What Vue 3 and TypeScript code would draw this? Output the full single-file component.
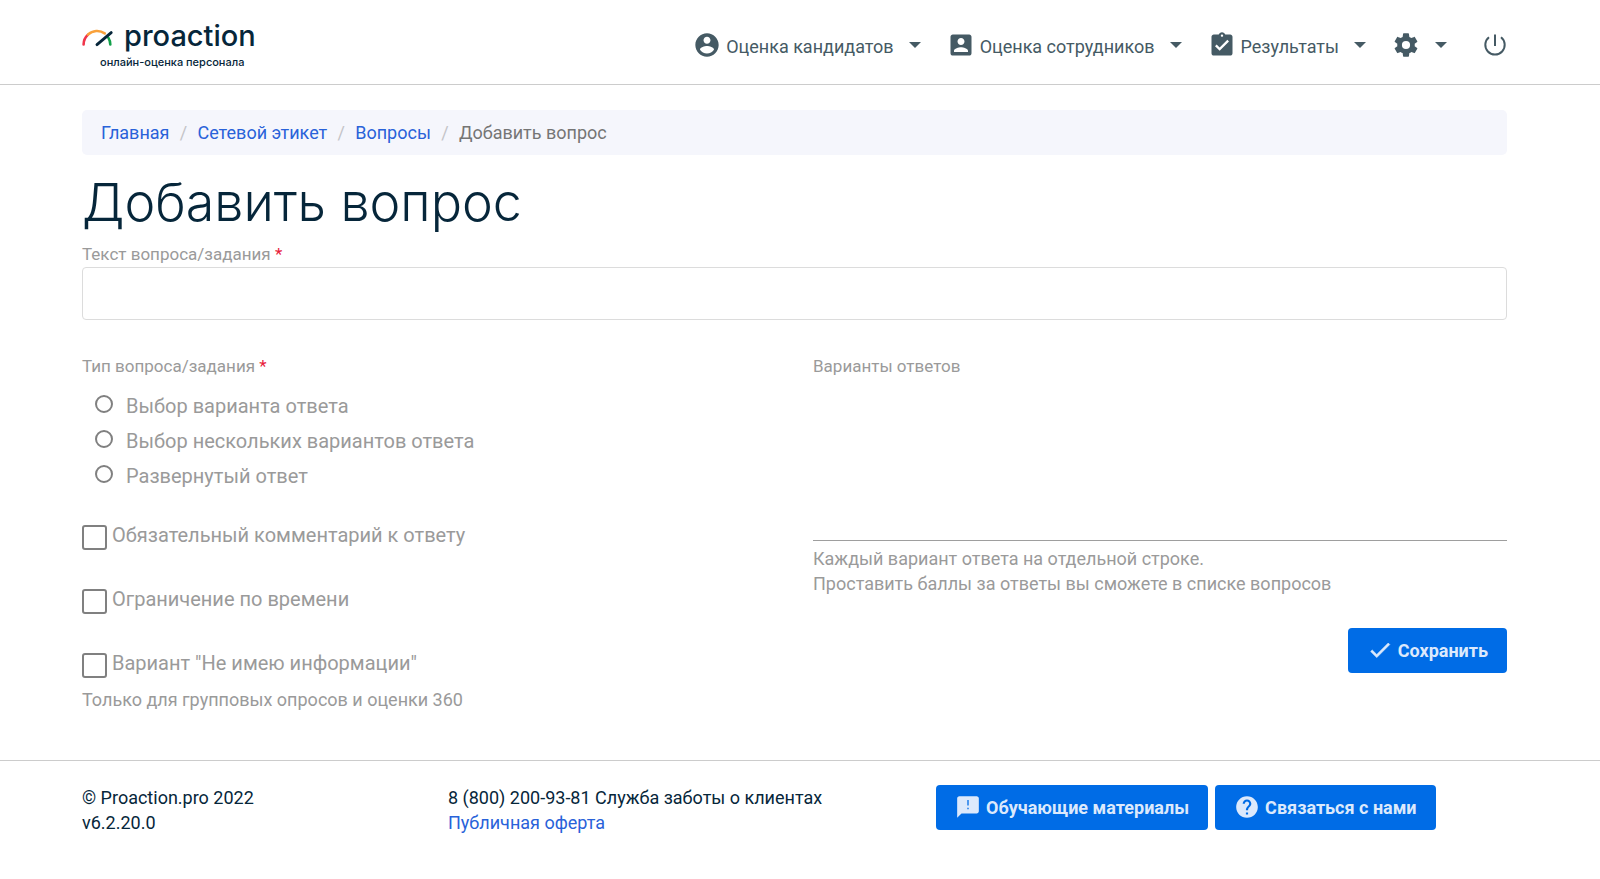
<script setup lang="ts">
import { ref } from 'vue'

interface NavItem { label: string; path: string }

const navItems: NavItem[] = [
  {
    label: 'Оценка кандидатов',
    path: 'M12 2C6.48 2 2 6.48 2 12s4.48 10 10 10 10-4.48 10-10S17.52 2 12 2zm0 3c1.66 0 3 1.34 3 3s-1.34 3-3 3-3-1.34-3-3 1.34-3 3-3zm0 14.2c-2.5 0-4.71-1.28-6-3.22.03-1.99 4-3.08 6-3.08 1.99 0 5.97 1.09 6 3.08-1.29 1.94-3.5 3.22-6 3.22z',
  },
  {
    label: 'Оценка сотрудников',
    path: 'M3 5v14c0 1.1.89 2 2 2h14c1.1 0 2-.9 2-2V5c0-1.1-.9-2-2-2H5c-1.11 0-2 .9-2 2zm12 4c0 1.66-1.34 3-3 3s-3-1.34-3-3 1.34-3 3-3 3 1.34 3 3zm-9 8c0-2 4-3.1 6-3.1s6 1.1 6 3.1v1H6v-1z',
  },
  {
    label: 'Результаты',
    path: 'M19 3h-4.18C14.4 1.84 13.3 1 12 1c-1.3 0-2.4.84-2.82 2H5c-1.1 0-2 .9-2 2v14c0 1.1.9 2 2 2h14c1.1 0 2-.9 2-2V5c0-1.1-.9-2-2-2zm-7 0c.55 0 1 .45 1 1s-.45 1-1 1-1-.45-1-1 .45-1 1-1zm-2 14l-4-4 1.41-1.41L10 14.17l6.59-6.59L18 9l-8 8z',
  },
]

const crumbs: string[] = ['Главная', 'Сетевой этикет', 'Вопросы']
const questionTypes: string[] = ['Выбор варианта ответа', 'Выбор нескольких вариантов ответа', 'Развернутый ответ']
const options: string[] = ['Обязательный комментарий к ответу', 'Ограничение по времени', 'Вариант "Не имею информации"']

const question = ref('')
const answers = ref('')
const questionType = ref('')
const enabled = ref<string[]>([])
</script>

<template>
  <div class="page">
    <header class="header">
      <div class="container header-row">
        <a class="logo" href="#" aria-label="proaction">
          <span class="logo-main">
            <svg class="logo-mark" viewBox="0 0 32 18" fill="none" stroke-width="2.6" stroke-linecap="round" aria-hidden="true">
              <path d="M26.300 8.600A13.300 13.300 0 0 1 28.300 15.400" stroke="#12a04a" />
              <path d="M1.600 15.400A13.300 13.300 0 0 1 6 5.600" stroke="#f0354b" />
              <path d="M6 5.600A13.300 13.300 0 0 1 22.700 4.400" stroke="#f9a13a" />
              <path d="M15 15.600L29.200 3.600" stroke="#06263a" stroke-width="2.900" />
            </svg>
            <span class="logo-name">proaction</span>
          </span>
          <span class="logo-tag">онлайн-оценка персонала</span>
        </a>
        <nav class="nav" aria-label="Главное меню">
          <button v-for="item in navItems" :key="item.label" type="button" class="nav-item">
            <svg class="icon" viewBox="0 0 24 24" aria-hidden="true"><path :d="item.path" /></svg>
            <span class="nav-label">{{ item.label }}</span>
            <span class="caret"></span>
          </button>
          <button type="button" class="nav-item" aria-label="Настройки">
            <svg class="icon" viewBox="0 0 24 24" aria-hidden="true">
              <path d="M12 15.5A3.5 3.5 0 0 1 8.500 12 3.500 3.500 0 0 1 12 8.500a3.500 3.500 0 0 1 3.500 3.500 3.500 3.500 0 0 1-3.500 3.500m7.430-2.530c.04-.32.07-.64.07-.97s-.03-.66-.07-1l2.110-1.630c.19-.15.24-.42.12-.64l-2-3.460c-.12-.22-.39-.31-.61-.22l-2.490 1c-.52-.39-1.060-.73-1.690-.98l-.37-2.650A.506.506 0 0 0 14 2h-4c-.25 0-.46.18-.5.42l-.37 2.650c-.63.25-1.170.59-1.690.98l-2.490-1c-.22-.09-.49 0-.61.22l-2 3.460c-.13.22-.07.49.12.64L4.570 11c-.04.34-.07.67-.07 1s.03.65.07.97l-2.110 1.660c-.19.15-.25.42-.12.64l2 3.460c.12.22.39.3.61.22l2.490-1.010c.52.4 1.060.74 1.690.99l.37 2.650c.04.24.25.42.5.42h4c.25 0 .46-.18.5-.42l.37-2.650c.63-.26 1.170-.59 1.690-.99l2.490 1.010c.22.08.49 0 .61-.22l2-3.460c.12-.22.07-.49-.12-.64l-2.110-1.660z" />
            </svg>
            <span class="caret"></span>
          </button>
          <button type="button" class="nav-item" aria-label="Выход">
            <svg class="icon power" viewBox="0 0 24 24" fill="none" stroke-width="2" aria-hidden="true">
              <path d="M12 1.500v11.500M6 4.300a9.700 9.700 0 1 0 12 0" />
            </svg>
          </button>
        </nav>
      </div>
    </header>

    <main class="container main">
      <nav class="breadcrumb" aria-label="Навигация">
        <template v-for="crumb in crumbs" :key="crumb">
          <a href="#">{{ crumb }}</a><span class="slash">/</span>
        </template>
        <span class="current">Добавить вопрос</span>
      </nav>
      <h1 class="title">Добавить вопрос</h1>

      <form @submit.prevent>
        <label class="label" for="question">Текст вопроса/задания <span class="required">*</span></label>
        <input id="question" v-model="question" class="question" type="text" />

        <div class="columns">
          <div>
            <fieldset class="types">
              <legend class="label">Тип вопроса/задания <span class="required">*</span></legend>
              <label v-for="t in questionTypes" :key="t" class="choice">
                <input v-model="questionType" type="radio" name="type" class="radio" :value="t" />
                <span>{{ t }}</span>
              </label>
            </fieldset>
            <div class="checks">
              <label v-for="o in options" :key="o" class="check">
                <input v-model="enabled" type="checkbox" class="box" :value="o" />
                <span>{{ o }}</span>
              </label>
            </div>
            <p class="hint group-hint">Только для групповых опросов и оценки 360</p>
          </div>
          <div class="answers">
            <label class="label" for="answers">Варианты ответов</label>
            <textarea id="answers" v-model="answers" class="answers-box"></textarea>
            <p class="hint">Каждый вариант ответа на отдельной строке.<br />Проставить баллы за ответы вы сможете в списке вопросов</p>
            <button type="submit" class="button save">
              <svg class="button-icon" viewBox="0 0 24 24" aria-hidden="true"><path d="M9 16.170L4.830 12l-1.420 1.410L9 19 21 7l-1.410-1.410z" stroke="#dce9fc" stroke-width=".6" /></svg>
              <span>Сохранить</span>
            </button>
          </div>
        </div>
      </form>
    </main>

    <footer class="footer">
      <div class="container footer-row">
        <div>© Proaction.pro 2022<br />v6.2.20.0</div>
        <div>8 (800) 200-93-81 Служба заботы о клиентах<br /><a href="#">Публичная оферта</a></div>
        <div class="footer-buttons">
          <button type="button" class="button">
            <svg class="button-icon" viewBox="0 0 24 24" aria-hidden="true"><path fill-rule="evenodd" d="M20 2H4c-1.100 0-2 .9-2 2v18l4-4h14c1.100 0 2-.9 2-2V4c0-1.100-.9-2-2-2zM12.600 14h-1.200v-1.400h1.200zM12.600 10.700h-1.200V5.500h1.200z" /></svg>
            <span>Обучающие материалы</span>
          </button>
          <button type="button" class="button">
            <svg class="button-icon" viewBox="0 0 24 24" aria-hidden="true"><path d="M12 2C6.480 2 2 6.480 2 12s4.480 10 10 10 10-4.480 10-10S17.520 2 12 2zm1 17h-2v-2h2v2zm2.070-7.750l-.9.920C13.450 12.900 13 13.500 13 15h-2v-.5c0-1.100.45-2.100 1.170-2.830l1.240-1.260c.37-.36.59-.86.59-1.410 0-1.100-.9-2-2-2s-2 .9-2 2H8c0-2.210 1.790-4 4-4s4 1.790 4 4c0 .88-.36 1.680-.93 2.250z" /></svg>
            <span>Связаться с нами</span>
          </button>
        </div>
      </div>
    </footer>
  </div>
</template>

<style>
body {
  margin: 0;
  background: #fff;
}
</style>

<style scoped>
.page {
  color: #06263a;
  font: 18px/25px Roboto, "Liberation Sans", sans-serif;
}
.page *,
.page *::before {
  box-sizing: border-box;
}
.container {
  padding: 0 93px 0 82px;
}
.header {
  border-bottom: 1px solid #ccc;
}
.header-row {
  display: flex;
  align-items: center;
  justify-content: space-between;
  height: 84px;
}
.logo {
  display: flex;
  flex-direction: column;
  padding-top: 8px;
  color: #06263a;
  text-decoration: none;
}
.logo-main {
  display: flex;
  align-items: center;
  gap: 10px;
}
.logo-mark {
  width: 32px;
  height: 18px;
  margin-top: 4px;
}
.logo-name {
  font: 500 29px/32px Inter, sans-serif;
}
.logo-tag {
  padding-left: 18px;
  font: 500 11px/20px Inter, sans-serif;
}
.nav {
  display: flex;
  align-items: center;
  gap: 26px;
  padding-top: 6px;
}
.nav-item {
  display: flex;
  align-items: center;
  padding: 0;
  border: 0;
  background: none;
  color: #455a64;
  font: 18px/25px Roboto, sans-serif;
}
.icon {
  width: 28px;
  height: 28px;
  fill: #455a64;
}
.power {
  width: 24px;
  height: 24px;
  margin-left: 10px;
  fill: none;
  stroke: #455a64;
}
.nav-label {
  padding: 3px 0 0 5px;
}
.caret {
  margin-left: 15px;
  border: 6px solid transparent;
  border-top-color: #455a64;
  border-bottom: 0;
}
.main {
  padding-top: 25px;
}
.breadcrumb {
  display: flex;
  align-items: center;
  height: 45px;
  padding: 0 19px;
  border-radius: 5px;
  background: #f5f6fc;
}
a {
  color: #2962d9;
  text-decoration: none;
}
.slash {
  width: 28px;
  color: #c4c4c8;
  text-align: center;
}
.current {
  color: #757575;
}
.title {
  margin: 20px 0 11px;
  font: 300 52px/56px Inter, sans-serif;
}
.label {
  display: block;
  padding: 0;
  color: #9a9a9a;
  font-size: 17px;
  line-height: 25px;
}
.required {
  color: #e8203a;
}
.question {
  display: block;
  width: 100%;
  height: 53px;
  padding: 0 12px;
  border: 1px solid #dcdcdc;
  border-radius: 4px;
  font: inherit;
}
.columns {
  display: grid;
  grid-template-columns: 1fr 1fr;
  gap: 37px;
  padding-top: 34px;
}
.types {
  min-width: 0;
  margin: 0;
  padding: 0;
  border: 0;
}
.types .label {
  padding-bottom: 10px;
}
.choice {
  display: flex;
  align-items: center;
  gap: 13px;
  height: 35px;
  padding-left: 13px;
  color: #9a9a9a;
  font-size: 20px;
}
.radio,
.box {
  flex: none;
  margin: 0;
  appearance: none;
  border: 2px solid #808080;
  background: #fff;
}
.radio {
  width: 18px;
  height: 18px;
  margin-bottom: 6px;
  border-radius: 50%;
}
.radio:checked,
.box:checked {
  border-color: #006ce6;
  background: #006ce6;
}
.checks {
  display: flex;
  flex-direction: column;
  gap: 38px;
  padding-top: 30px;
}
.check {
  display: flex;
  align-items: flex-start;
  gap: 5px;
  color: #9a9a9a;
  font-size: 20px;
  line-height: 23px;
}
.box {
  width: 25px;
  height: 25px;
  margin-top: 1px;
  border-radius: 3px;
}
.hint {
  margin: 0;
  color: #9a9a9a;
}
.group-hint {
  padding: 9px 0 48px;
}
.answers {
  display: flex;
  flex-direction: column;
}
.answers-box {
  width: 100%;
  height: 162px;
  margin-bottom: 5px;
  padding: 8px 0;
  border: 0;
  border-bottom: 1px solid #9e9e9e;
  outline: 0;
  resize: none;
  font: inherit;
}
.button {
  display: flex;
  align-items: center;
  gap: 5px;
  height: 45px;
  padding: 0 19px;
  border: 0;
  border-radius: 4px;
  background: #006ce6;
  color: #dce9fc;
  font: 700 18px/25px Roboto, sans-serif;
  white-space: nowrap;
}
.button-icon {
  width: 26px;
  height: 26px;
  margin-bottom: 2px;
  fill: #dce9fc;
}
.save {
  align-self: flex-end;
  margin-top: 32px;
}
.footer {
  border-top: 1px solid #ccc;
}
.footer-row {
  display: grid;
  grid-template-columns: 366px 488px 1fr;
  padding-top: 24px;
}
.footer-buttons {
  display: flex;
  gap: 7px;
}
</style>
